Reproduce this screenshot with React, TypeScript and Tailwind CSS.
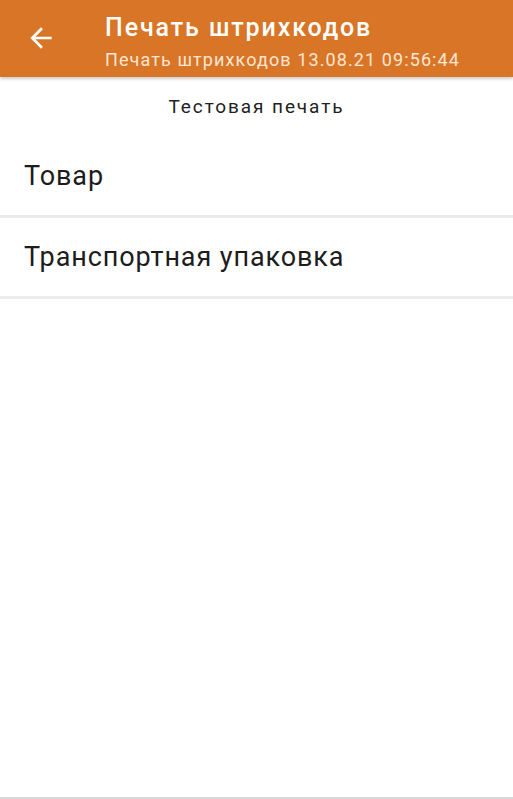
const items = ['Товар', 'Транспортная упаковка'];

export default function App() {
  return (
    <div className="flex h-[799px] w-[513px] flex-col bg-white font-['Roboto',sans-serif]">
      {/* Header */}
      <div className="relative z-10 flex h-[77px] bg-[#d97526] shadow-[0_2px_3px_rgba(0,0,0,0.2)]">
        <div className="flex w-[105px] items-center pl-[25px] pb-[2px]">
          <svg viewBox="0 0 24 24" className="h-[32px] w-[32px] fill-white">
            <path d="M20 11H7.83l5.59-5.59L12 4l-8 8 8 8 1.41-1.41L7.83 13H20v-2z" />
          </svg>
        </div>
        <div className="flex flex-col pt-[13px]">
          <span className="text-[25px] leading-[30px] font-medium tracking-[1.9px] text-white">Печать штрихкодов</span>
          <span className="mt-[6px] text-[18px] leading-[22px] tracking-[1.1px] text-[#fce6d4]">Печать штрихкодов 13.08.21 09:56:44</span>
        </div>
      </div>

      {/* Content */}
      <div className="flex h-[60px] justify-center pt-[19px] text-[19px] leading-[22px] tracking-[1.9px] text-[#222]">
        Тестовая печать
      </div>
      <div className="flex flex-col">
        {items.map((item) => (
          <div
            key={item}
            className="flex h-[81px] border-b-[3px] border-[#ebebeb] px-[24px] pt-[23px] text-[27px] leading-[32px] tracking-[0.9px] text-[#1c1c1c]"
          >
            {item}
          </div>
        ))}
      </div>
      <div className="flex-1" />
      <div className="h-[2px] bg-[#d6d6d6]" />
    </div>
  );
}
